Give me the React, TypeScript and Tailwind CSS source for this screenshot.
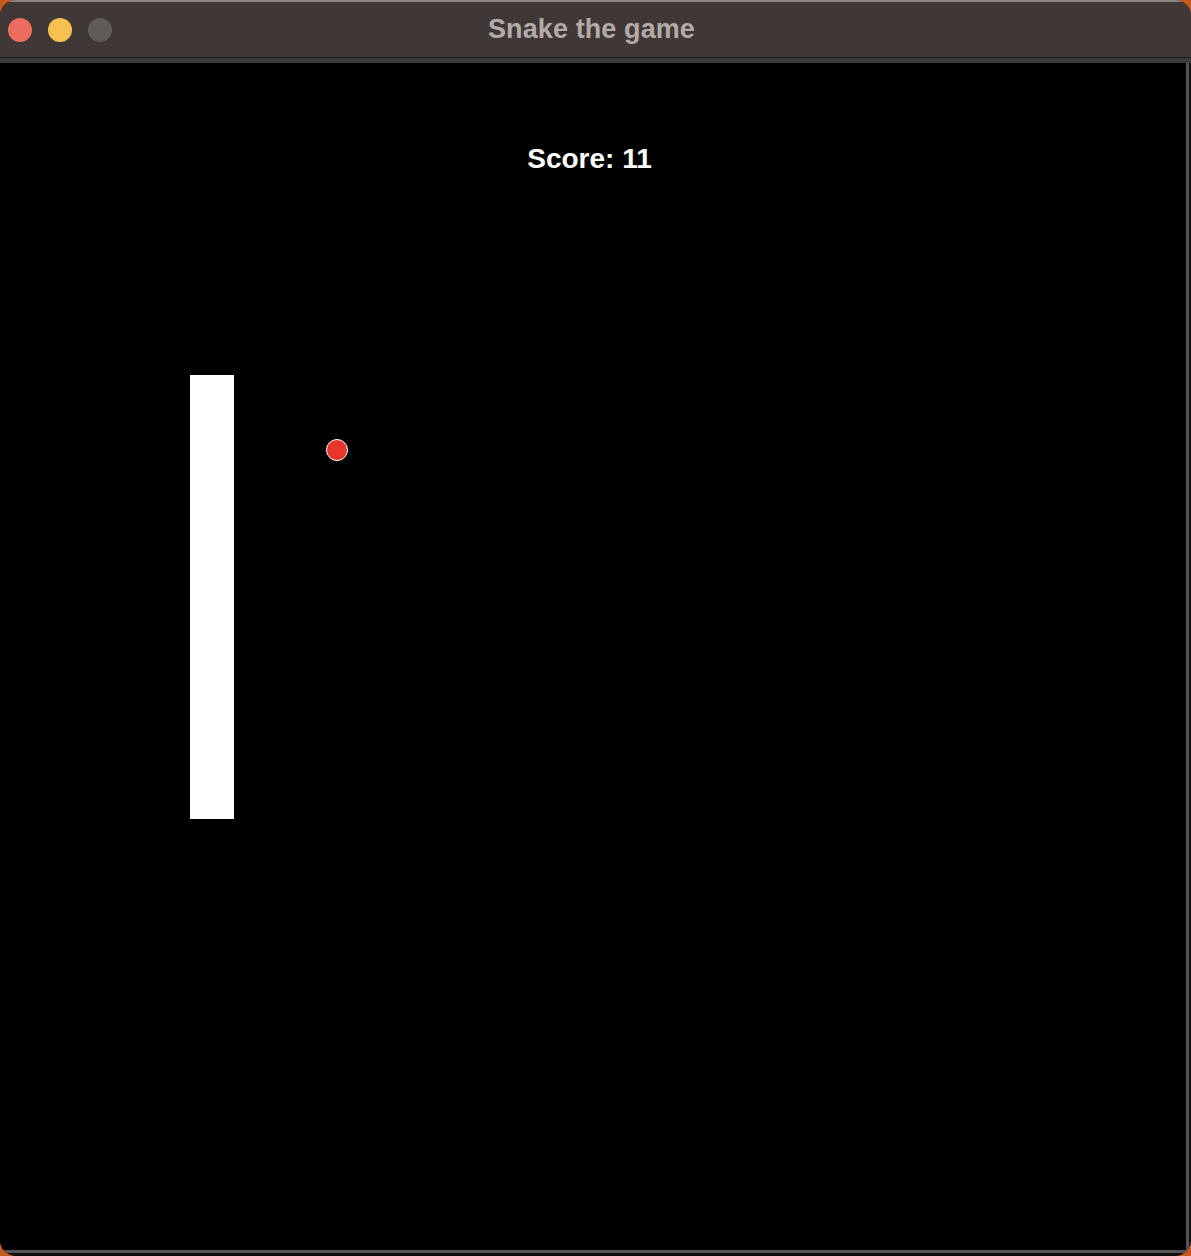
const lights = ["bg-[#ee6b60]", "bg-[#f5c04f]", "bg-[#5f5b59]"];

function TitleBar() {
  return (
    <div className="flex h-[57px] items-center border-t-2 border-[#8a8482] bg-[#403836]">
      <div className="flex w-[120px] gap-4 pl-2">
        {lights.map((c) => (
          <span key={c} className={`h-6 w-6 rounded-full ${c}`} />
        ))}
      </div>
      <h1 className="flex-1 pr-[128px] text-center text-[27px] font-bold leading-none tracking-[0.1px] text-[#b3aba9]">
        Snake the game
      </h1>
    </div>
  );
}

function Board() {
  return (
    <div className="relative h-[1187px] w-[1186px] bg-black">
      <p className="pt-[82px] text-center text-[28px] font-bold leading-none text-white">
        <span className="mr-[7px]">Score: 11</span>
      </p>
      {/* snake body */}
      <div className="absolute left-[190px] top-[312px] h-[444px] w-[44px] bg-white" />
      {/* food */}
      <div className="absolute left-[326px] top-[376px] h-[22px] w-[22px] rounded-full border-[1.5px] border-white bg-[#e8352a]" />
    </div>
  );
}

export default function App() {
  return (
    <div
      className="h-[1256px] w-[1191px] bg-[#c65a1e]"
      style={{ fontFamily: '"Liberation Sans", Arial, sans-serif' }}
    >
      <div className="flex h-full w-full flex-col overflow-hidden rounded-[16px] bg-[#0d0d0d]">
        <TitleBar />
        <div className="h-px bg-[#1a1a1a]" />
        <div className="h-[5px] bg-[#3a3a3a]" />
        <div className="flex">
          <div className="border-b-[3px] border-r-[3px] border-[#545454]">
            <Board />
          </div>
        </div>
      </div>
    </div>
  );
}
